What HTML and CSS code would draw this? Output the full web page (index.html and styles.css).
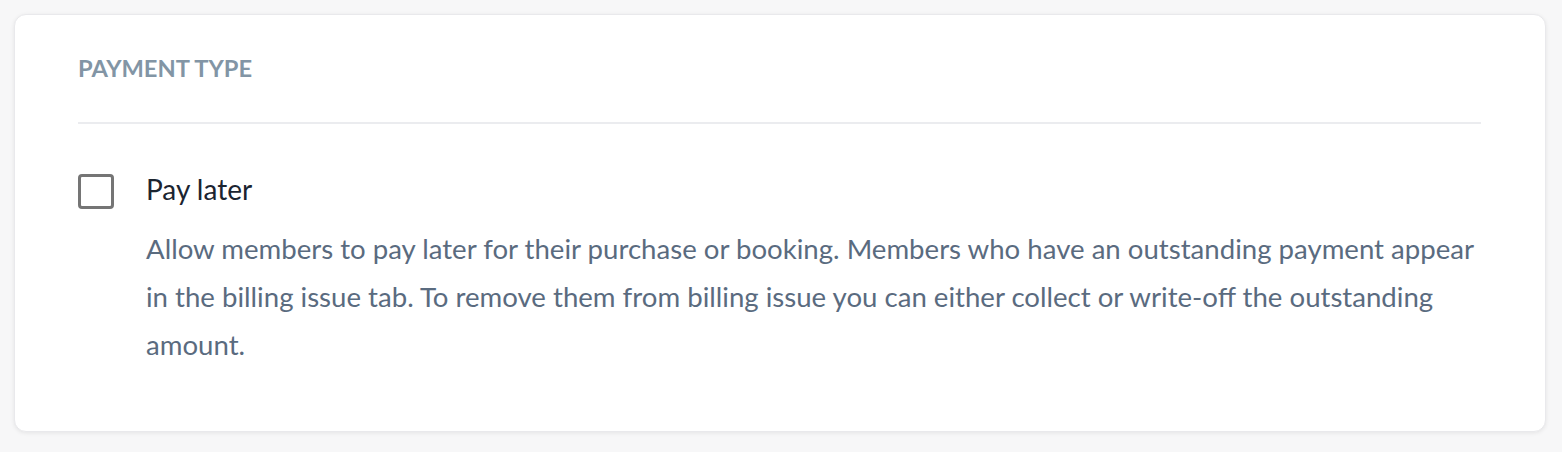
FILE: index.html
```html
<!DOCTYPE html>
<html lang="en">
<head>
<meta charset="utf-8">
<title>Payment type</title>
<link rel="stylesheet" href="styles.css">
</head>
<body>
<section class="card">
  <h2 class="card-title">Payment type</h2>
  <hr class="divider">
  <label class="option">
    <span class="checkbox"></span>
    <span class="option-text">
      <span class="option-title">Pay later</span>
      <span class="option-desc">Allow members to pay later for their purchase or booking. Members who have an outstanding payment appear in the billing issue tab. To remove them from billing issue you can either collect or write-off the outstanding amount.</span>
    </span>
  </label>
</section>
</body>
</html>
```
FILE: styles.css
```css
* { box-sizing: border-box; }
html, body { margin: 0; padding: 0; }
body {
  background: #f7f7f8;
  font-family: Lato, "Noto Sans", sans-serif;
  padding: 14px 16px 20px 14px;
}
.card {
  background: #fff;
  border: 1px solid #e9e9ec;
  border-radius: 12px;
  box-shadow: 0 1px 4px rgba(0, 0, 0, 0.08);
  padding: 39px 64px 40px 63px;
  height: 418px;
}
.card-title {
  margin: 0 0 39px 0;
  font-size: 23.7px;
  line-height: 28.8px;
  font-weight: 700;
  color: #8295a5;
  text-transform: uppercase;
}
.divider {
  border: 0;
  height: 2px;
  background: #ebecef;
  margin: 0 0 47px 0;
}
.option {
  display: flex;
  gap: 32px;
  align-items: flex-start;
}
.checkbox {
  flex: none;
  width: 36px;
  height: 35px;
  margin-top: 3px;
  border: 3px solid #757575;
  border-radius: 4px;
}
.option-text {
  display: flex;
  flex-direction: column;
  gap: 18px;
}
.option-title {
  font-size: 28px;
  line-height: 36px;
  color: #1b2430;
}
.option-desc {
  font-size: 27.6px;
  line-height: 48px;
  color: #5a6b7f;
}
```
